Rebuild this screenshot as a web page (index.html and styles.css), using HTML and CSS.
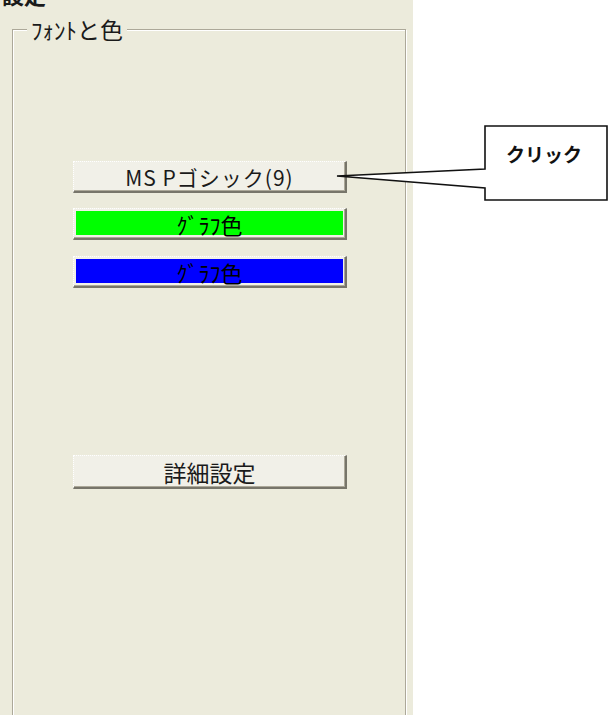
FILE: index.html
```html
<!DOCTYPE html>
<html lang="ja">
<head>
    <meta charset="UTF-8">
    <title>設定</title>
    <link rel="stylesheet" href="styles.css">
</head>
<body>
    <div class="page">
        <div class="panel">
            <div class="title">設定</div>
            <div class="group">
                <div class="group-title">ﾌｫﾝﾄと色</div>
                <button class="btn btn-font">MS Pゴシック(9)</button>
                <button class="btn btn-color"><span class="swatch swatch-green">ｸﾞﾗﾌ色</span></button>
                <button class="btn btn-color btn-blue"><span class="swatch swatch-blue">ｸﾞﾗﾌ色</span></button>
                <button class="btn btn-detail">詳細設定</button>
            </div>
        </div>

        <div class="callout">
            <svg width="278" height="90" viewBox="330 120 278 90">
                <path d="M337 176 L485 169 L485 126 L607 126 L607 200 L485 200 L485 188 Z" fill="#fff" stroke="#111" stroke-width="1.6" stroke-linejoin="miter"/>
            </svg>
            <span class="callout-text">クリック</span>
        </div>
    </div>
</body>
</html>
```

FILE: styles.css
```css
body {
    margin: 0;
    background: #fff;
    font-family: "Noto Sans CJK JP", "Noto Sans", sans-serif;
    color: #1a1a1a;
}
.page {
    position: relative;
    width: 608px;
    height: 715px;
    overflow: hidden;
}
.panel {
    width: 413px;
    height: 715px;
    background: #ecebdc;
    overflow: hidden;
}
.title {
    margin: -18px 0 0 2px;
    font-size: 22px;
    line-height: 24px;
    font-weight: bold;
}
.group {
    margin: 23px 0 0 12px;
    width: 392px;
    height: 800px;
    border: 1px solid #aca899;
    box-shadow: inset 1px 1px #fff, 1px 1px #fff;
}
.group-title {
    display: block;
    width: fit-content;
    margin: -13px 0 0 14px;
    padding: 0 4px;
    background: #ecebdc;
    font-size: 23px;
    line-height: 24px;
}
.btn {
    display: block;
    box-sizing: border-box;
    width: 274px;
    height: 32px;
    margin-left: 60px;
    padding: 0;
    background: #f1f0e8;
    border-top: 1px dotted #fff;
    border-left: 1px dotted #fff;
    border-right: 2px solid #77756a;
    border-bottom: 2px solid #77756a;
    box-shadow: inset -1px -1px #aca899;
    font-family: "Noto Sans CJK JP", sans-serif;
    color: #1a1a1a;
    text-align: center;
}
.btn-font {
    margin-top: 120px;
    font-size: 21px;
    line-height: 28px;
    letter-spacing: 1px;
}
.btn-color {
    margin-top: 15px;
    padding: 2px 2px 3px 2px;
}
.btn-blue {
    margin-top: 16px;
}
.swatch {
    display: block;
    height: 100%;
    font-size: 22px;
    line-height: 26px;
    color: #000;
}
.swatch-green {
    background: #00ff00;
}
.swatch-blue {
    background: #0000ff;
}
.btn-detail {
    margin-top: 167px;
    height: 34px;
    font-size: 23px;
    line-height: 30px;
}
.callout {
    position: absolute;
    left: 330px;
    top: 120px;
    width: 278px;
    height: 90px;
}
.callout svg {
    display: block;
}
.callout-text {
    position: absolute;
    left: 176px;
    top: 21px;
    font-size: 19px;
    line-height: 26px;
    font-weight: bold;
    color: #111;
}
```
